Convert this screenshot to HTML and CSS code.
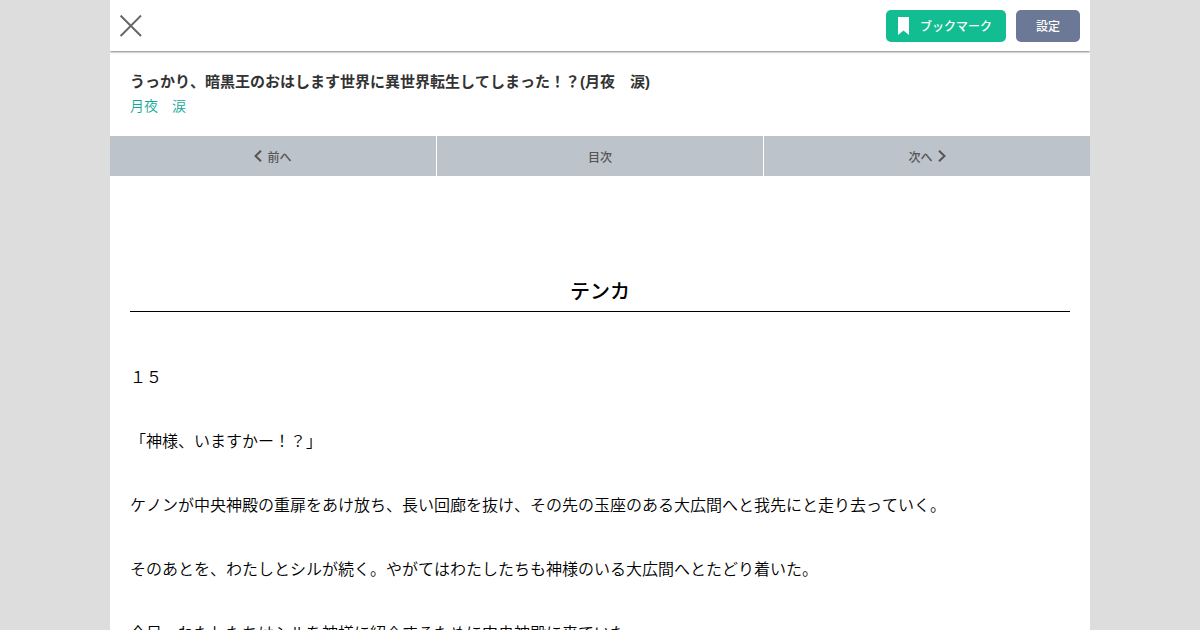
FILE: index.html
```html
<!DOCTYPE html>
<html lang="ja">
<head>
<meta charset="utf-8">
<title>テンカ</title>
<link rel="stylesheet" href="styles.css">
</head>
<body>
<div class="page">
  <header class="topbar">
    <button class="close" aria-label="閉じる">
      <svg width="22" height="22" viewBox="0 0 22 22"><path d="M.6 .6L21 21M21 .6L.6 21" stroke="#666" stroke-width="2" fill="none"/></svg>
    </button>
    <div class="actions">
      <a class="btn btn-mark">
        <svg width="11" height="18" viewBox="0 0 11 18"><path d="M0 0H11V18L5.5 13.5L0 18Z" fill="#fff"/></svg>
        <span>ブックマーク</span>
      </a>
      <a class="btn btn-set">設定</a>
    </div>
  </header>
  <section class="meta">
    <h1 class="novel">うっかり、暗黒王のおはします世界に異世界転生してしまった！？(月夜　涙)</h1>
    <a class="author">月夜　涙</a>
  </section>
  <nav class="pager">
    <a class="pager-item">
      <svg width="8" height="12" viewBox="0 0 8 12"><path d="M7 .7L1.5 6L7 11.3" stroke="#555" stroke-width="2" fill="none"/></svg>
      <span>前へ</span>
    </a>
    <a class="pager-item">目次</a>
    <a class="pager-item">
      <span>次へ</span>
      <svg width="8" height="12" viewBox="0 0 8 12"><path d="M1 .7L6.5 6L1 11.3" stroke="#555" stroke-width="2" fill="none"/></svg>
    </a>
  </nav>
  <main class="content">
    <h2 class="chapter">テンカ</h2>
    <div class="body">
      <p>１５</p>
      <p>「神様、いますかー！？」</p>
      <p>ケノンが中央神殿の重扉をあけ放ち、長い回廊を抜け、その先の玉座のある大広間へと我先にと走り去っていく。</p>
      <p>そのあとを、わたしとシルが続く。やがてはわたしたちも神様のいる大広間へとたどり着いた。</p>
      <p>今日、わたしたちはシルを神様に紹介するために中央神殿に来ていた。</p>
    </div>
  </main>
</div>
</body>
</html>
```
FILE: styles.css
```css
html, body {
  margin: 0;
  height: 630px;
  overflow: hidden;
  background: #dddddd;
  font-family: "Liberation Sans", "Noto Sans CJK JP", sans-serif;
  text-spacing-trim: space-all;
  font-kerning: none;
}
.page {
  width: 980px;
  height: 630px;
  margin: 0 auto;
  background: #fff;
  overflow: hidden;
}
.topbar {
  height: 51px;
  display: flex;
  align-items: center;
  justify-content: space-between;
  padding: 0 10px;
  background: #fff;
  box-shadow: 0 1px 2px rgba(0, 0, 0, 0.5);
}
.close {
  width: 22px;
  height: 22px;
  padding: 0;
  border: 0;
  background: none;
  display: block;
}
.close svg { display: block; }
.actions {
  display: flex;
  gap: 10px;
}
.btn {
  height: 32px;
  border-radius: 5px;
  display: flex;
  align-items: center;
  justify-content: center;
  color: #fff;
  font-size: 12px;
  font-weight: 500;
}
.btn-mark {
  width: 120px;
  box-sizing: border-box;
  padding-right: 2px;
  gap: 11px;
  background: #13bd92;
}
.btn-mark svg { display: block; }
.btn-set {
  width: 64px;
  background: #6b7896;
}
.meta {
  height: 85px;
  padding: 20px 20px 0;
  box-sizing: border-box;
}
.novel {
  margin: 0;
  font-size: 15px;
  line-height: 22px;
  font-weight: bold;
  color: #333;
}
.author {
  display: block;
  margin-top: 2px;
  font-size: 14px;
  font-weight: 350;
  line-height: 22px;
  color: #13a89a;
}
.pager {
  display: flex;
  gap: 1px;
  height: 40px;
}
.pager-item {
  flex: 1;
  display: flex;
  align-items: center;
  justify-content: center;
  gap: 5px;
  background: #bdc3ca;
  color: #555;
  font-size: 12px;
  font-weight: 500;
}
.pager-item svg { display: block; }
.content { padding: 0 20px; }
.chapter {
  margin: 100px 0 0;
  height: 36px;
  line-height: 32px;
  font-size: 20px;
  font-weight: 500;
  text-align: center;
  color: #000;
  border-bottom: 1px solid #000;
  box-sizing: border-box;
}
.body {
  margin-top: 34px;
  font-size: 16px;
  font-weight: 350;
  line-height: 64px;
  color: #000;
}
.body p { margin: 0; }
```
